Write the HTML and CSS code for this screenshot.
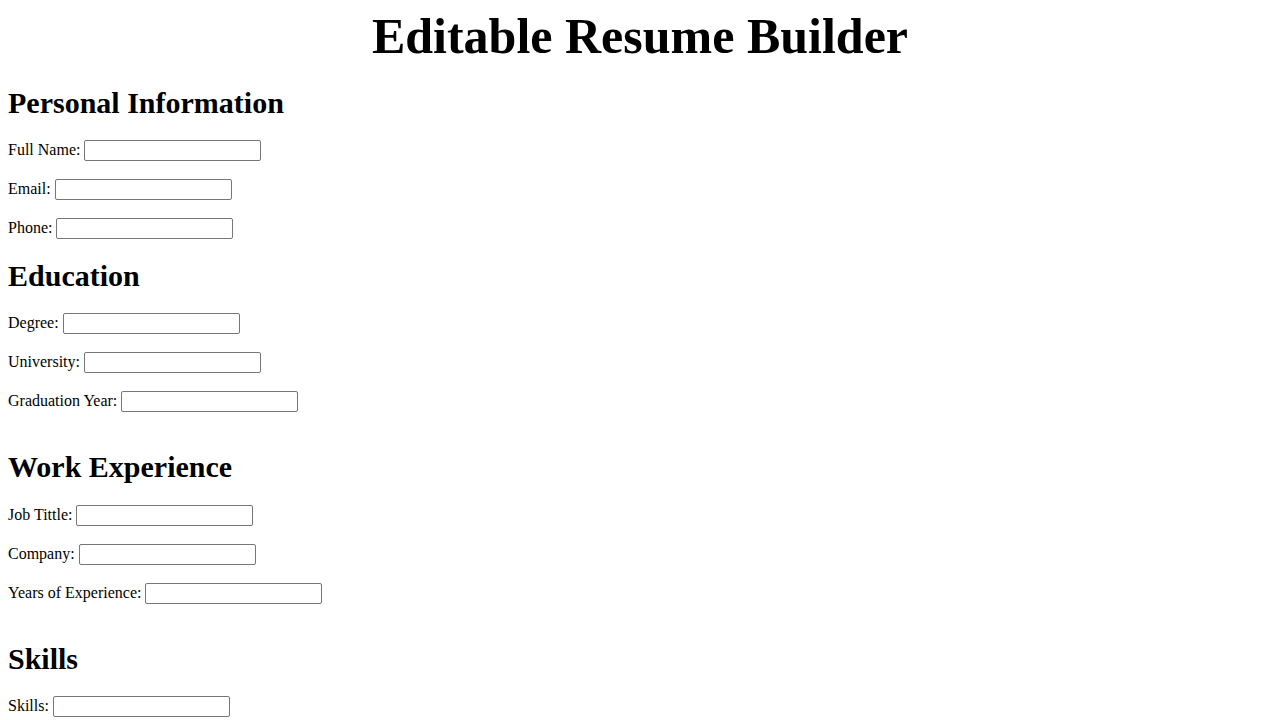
FILE: index.html
```html
<!DOCTYPE html>
<html>
<head>
  <title>Editable Resume Builder</title>
  <link rel="stylesheet" href="styles.css">
</head>
<body>
  <h1>Editable Resume Builder</h1>
  <form id="resume-form">
    <div class="section">
      <h2>Personal Information</h2>
      <div class="form-row"><label for="name">Full Name:</label> <input type="text" id="name" name="name"></div>
      <div class="form-row"><label for="email">Email:</label> <input type="email" id="email" name="email"></div>
      <div class="form-row"><label for="phone">Phone:</label> <input type="text" id="phone" name="phone"></div>
    </div>
    <div class="section spaced">
      <h2>Education</h2>
      <div class="form-row"><label for="degree">Degree:</label> <input type="text" id="degree" name="degree"></div>
      <div class="form-row"><label for="university">University:</label> <input type="text" id="university" name="university"></div>
      <div class="form-row"><label for="grad-year">Graduation Year:</label> <input type="text" id="grad-year" name="grad-year"></div>
    </div>
    <div class="section spaced work">
      <h2>Work Experience</h2>
      <div class="form-row"><label for="job">Job Tittle:</label> <input type="text" id="job" name="job"></div>
      <div class="form-row"><label for="company">Company:</label> <input type="text" id="company" name="company"></div>
      <div class="form-row"><label for="years">Years of Experience:</label> <input type="text" id="years" name="years"></div>
    </div>
    <div class="section">
      <h2>Skills</h2>
      <div class="form-row"><label for="skills">Skills:</label> <input type="text" id="skills" name="skills"></div>
    </div>
  </form>
</body>
</html>
```

FILE: styles.css
```css
body {
  font-family: "Liberation Serif", "Times New Roman", serif;
  font-size: 16px;
  color: #000;
  background-color: #fff;
  margin: 8px;
}

h1 {
  font-size: 50px;
  line-height: 56px;
  text-align: center;
  margin: 0 0 22px;
}

h2 {
  font-size: 30px;
  line-height: 34px;
  margin: 20px 0;
}

.section.spaced {
  margin-bottom: 38px;
}

.section.work h2 {
  margin-bottom: 21px;
}

.form-row {
  margin-bottom: 18px;
}

.form-row input {
  box-sizing: border-box;
  width: 177px;
  height: 21px;
  padding: 1px 2px;
  border: 1px solid #767676;
  border-radius: 2px;
  font: 13.333px "Liberation Sans", Arial, sans-serif;
  background-color: #fff;
}
```
